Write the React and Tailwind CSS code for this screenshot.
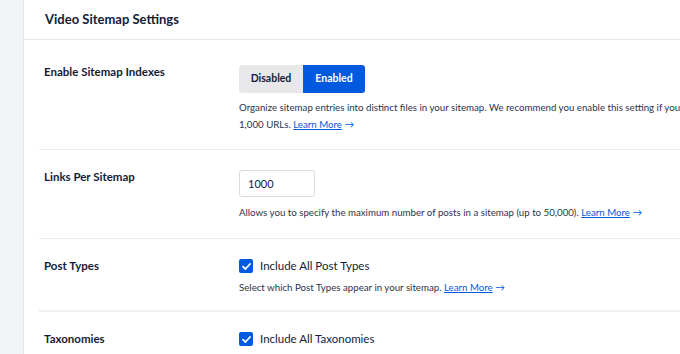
import React from 'react';

const font = { fontFamily: 'Lato, "Noto Sans", sans-serif' };

function LearnMore() {
  return (
    <>
      {' '}
      <a href="#" className="text-[#005ae0] underline">Learn More</a>
      <span className="text-[#005ae0]"> →</span>
    </>
  );
}

function Check({ label }) {
  return (
    <label className="flex items-center gap-[7px] text-[11.5px] text-[#141b38] leading-[14px]">
      <span className="flex h-[14px] w-[14px] items-center justify-center rounded-[2px] bg-[#005ae0]">
        <svg width="9" height="7" viewBox="0 0 9 7" fill="none">
          <path d="M1 3.6 L3.4 6 L8 1" stroke="white" strokeWidth="1.8" strokeLinecap="round" strokeLinejoin="round" />
        </svg>
      </span>
      {label}
    </label>
  );
}

function Row({ label, children, className }) {
  return (
    <div className={`ml-[15px] flex border-[#ebebed] ${className}`}>
      <div className="w-[200px] shrink-0 pl-[5px] text-[11.5px] font-bold leading-[14px] text-[#141b38]">{label}</div>
      <div className="flex-1">{children}</div>
    </div>
  );
}

export default function App() {
  return (
    <div className="flex h-[354px] w-[680px] overflow-hidden bg-white" style={font}>
      <div className="w-[24px] shrink-0 border-r border-[#e6e7ea] bg-[#f3f4f5]" />
      <div className="min-w-[900px] flex-1">
        <div className="flex h-[40px] items-center border-b border-[#e8e8eb] pl-[21px]">
          <h2 className="text-[13px] font-bold text-[#141b38]">Video Sitemap Settings</h2>
        </div>

        <Row label="Enable Sitemap Indexes" className="border-b pt-[25px] pb-[16px]">
          <div className="flex">
            <button className="h-[28px] w-[64px] rounded-l-[3px] bg-[#e8e8eb] text-[10.5px] font-bold text-[#141b38]">Disabled</button>
            <button className="h-[28px] w-[62px] rounded-r-[3px] bg-[#005ae0] text-[10.5px] font-bold text-white">Enabled</button>
          </div>
          <p className="mt-[6px] whitespace-nowrap text-[9.7px] leading-[17px] text-[#2c324c]">
            Organize sitemap entries into distinct files in your sitemap. We recommend you enable this setting if you have more than
            <br />
            1,000 URLs.<LearnMore />
          </p>
        </Row>

        <Row label="Links Per Sitemap" className="border-b pt-[20px] pb-[17px]">
          <input
            defaultValue="1000"
            className="h-[27px] w-[76px] rounded-[3px] border border-[#dcdde0] px-[8px] text-[11px] text-[#141b38] outline-none"
          />
          <p className="mt-[7px] text-[9.7px] leading-[17px] text-[#2c324c]">
            Allows you to specify the maximum number of posts in a sitemap (up to 50,000).<LearnMore />
          </p>
        </Row>

        <Row label="Post Types" className="border-b-[2px] border-[#f0f0f1] pt-[20px] pb-[14px]">
          <Check label="Include All Post Types" />
          <p className="mt-[6px] text-[9.7px] leading-[17px] text-[#2c324c]">
            Select which Post Types appear in your sitemap.<LearnMore />
          </p>
        </Row>

        <Row label="Taxonomies" className="pt-[20px]">
          <Check label="Include All Taxonomies" />
        </Row>
      </div>
    </div>
  );
}
